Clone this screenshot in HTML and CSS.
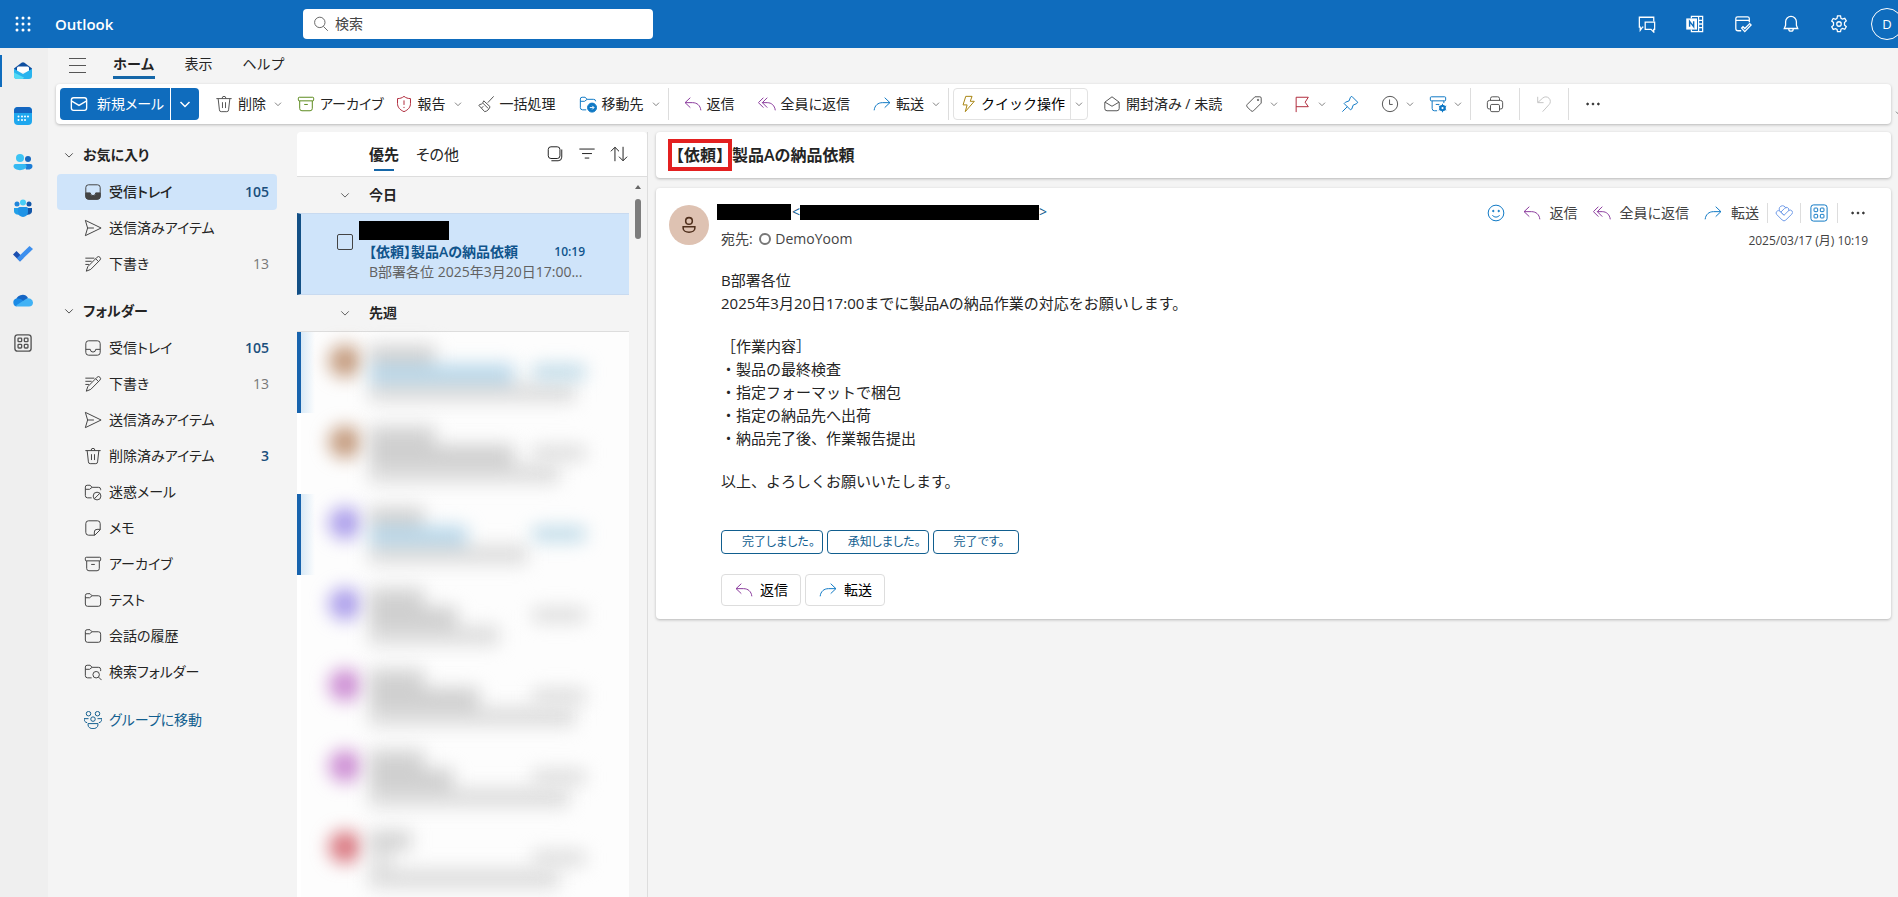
FILE: index.html
```html
<!DOCTYPE html>
<html lang="ja">
<head>
<meta charset="utf-8">
<title>Outlook</title>
<link rel="stylesheet" href="styles.css">
</head>
<body>
<svg class="sprite" aria-hidden="true">
  <symbol id="chev" viewBox="0 0 12 12"><path d="M1.500 4 6 8.500 10.500 4"/></symbol>
  <symbol id="trash" viewBox="0 0 20 20"><path d="M1.500 4h17M8 4v-.5a2 2 0 0 1 4 0V4M3.500 4l1.400 12.500A2 2 0 0 0 6.900 18.500h6.200a2 2 0 0 0 2-2L16.500 4M8.300 8v6.500M11.700 8v6.500"/></symbol>
  <symbol id="archive" viewBox="0 0 20 20"><rect x="1.500" y="2.500" width="17" height="4" rx="1"/><path d="M3 6.500V15a2.500 2.500 0 0 0 2.500 2.500h9A2.500 2.500 0 0 0 17 15V6.500M8 10.500h4"/></symbol>
  <symbol id="shield" viewBox="0 0 20 20"><path d="M10 1.500c2 1.700 4.500 2.500 7.200 2.500v5.500c0 4-2.500 7-7.200 9-4.700-2-7.200-5-7.200-9V4C5.500 4 8 3.200 10 1.500zM10 6v5M10 13.200v1.300"/></symbol>
  <symbol id="broom" viewBox="0 0 20 20"><path d="m18.500 1.500-6.500 7M7.500 6.500l7 6.500c-1 3-3 5-6 5.500L2 11.500c1-1 1.500-1 3-1.500 1.300-.7 2-2 2.500-3.500zM5 14.500l2-2M6.500 9l6 6"/></symbol>
  <symbol id="folder" viewBox="0 0 20 20"><path d="M1.500 5A2 2 0 0 1 3.500 3h3.200l2.300 2.300H16A2.500 2.500 0 0 1 18.500 8v6.500A2.500 2.500 0 0 1 16 17H4a2.500 2.500 0 0 1-2.500-2.500zM1.500 7.500h4.700L9 5.300"/></symbol>
  <symbol id="foldermove" viewBox="0 0 20 20"><path d="M8 16.500H4A2.500 2.500 0 0 1 1.500 14V4.500a2 2 0 0 1 2-2h3.200L9 4.800h7A2.300 2.300 0 0 1 18.500 7M1.500 7h4.700L9 4.800"/><circle cx="14.500" cy="14" r="5" class="fill"/><path class="white" d="M12 14h4.500M14.700 12l2 2-2 2"/></symbol>
  <symbol id="folderblock" viewBox="0 0 20 20"><path d="M8.500 16.500H4A2.500 2.500 0 0 1 1.500 14V4.500a2 2 0 0 1 2-2h3.200L9 4.800h7A2.300 2.300 0 0 1 18.500 7v1M1.500 7h4.700L9 4.800"/><circle cx="14.500" cy="14.500" r="4.300"/><path d="m11.500 17.500 6-6"/></symbol>
  <symbol id="foldersearch" viewBox="0 0 20 20"><path d="M8.500 16.500H4A2.500 2.500 0 0 1 1.500 14V4.500a2 2 0 0 1 2-2h3.200L9 4.800h7A2.300 2.300 0 0 1 18.500 7v2M1.500 7h4.700L9 4.800"/><circle cx="13.500" cy="13" r="3.600"/><path d="m16.200 15.700 3.300 3.300"/></symbol>
  <symbol id="reply" viewBox="0 0 20 20"><path d="M7 3 1.200 8.500 7 14M1.200 8.500h8.300c5 0 8.700 3.200 9.200 8.500"/></symbol>
  <symbol id="replyall" viewBox="0 0 20 20"><path d="M6 3 .5 8.500 6 14M10.300 3 4.800 8.500l5.500 5.500M4.800 8.500h5.500c4.700 0 8.200 3.200 8.900 8.500"/></symbol>
  <symbol id="forward" viewBox="0 0 20 20"><path d="m13 3 5.800 5.500L13 14M18.800 8.500h-8.300c-5 0-8.700 3.200-9.200 8.500"/></symbol>
  <symbol id="bolt" viewBox="0 0 20 20"><path d="M7.500 1.500h7L12.500 7H17L7 18.500l2-7.500H4.500z"/></symbol>
  <symbol id="mailopen" viewBox="0 0 20 20"><path d="M2 8 10 2l8 6v7a2.500 2.500 0 0 1-2.500 2.500h-11A2.500 2.500 0 0 1 2 15zM2.300 8 10 12.500 17.700 8"/></symbol>
  <symbol id="tag" viewBox="0 0 20 20"><path d="M11 2h5.500A1.500 1.500 0 0 1 18 3.500V9l-8.500 8.500a2 2 0 0 1-2.800 0l-4.200-4.200a2 2 0 0 1 0-2.800z"/><circle cx="14.500" cy="5.500" r=".8"/></symbol>
  <symbol id="flag" viewBox="0 0 20 20"><path d="M3.500 19V2.500h13.500L13.500 8l3.500 5H3.500"/></symbol>
  <symbol id="pin" viewBox="0 0 20 20"><path d="m12 1.500 6.500 6.500-1 1.500-4 1.800-1.500 4.200-1.500 1L3.500 9.500 5 8l4-1.500L10.500 2.500zM7 13l-5.500 5.500"/></symbol>
  <symbol id="clock" viewBox="0 0 20 20"><circle cx="10" cy="10" r="8.500"/><path d="M9.500 5v5.500H13"/></symbol>
  <symbol id="rules" viewBox="0 0 20 20"><rect x="1.500" y="2" width="17" height="4.500" rx="1"/><path d="M3.500 6.500V15A2.500 2.500 0 0 0 6 17.500h3M16.500 6.500V9M7.500 10.500h4"/><circle cx="15" cy="14.500" r="3.200" class="fill"/><path d="M15 9.800v9.400M10.900 12.200l8.200 4.600M10.900 16.800l8.200-4.600"/><circle cx="15" cy="14.500" r="1.200" class="dot"/></symbol>
  <symbol id="printer" viewBox="0 0 20 20"><path d="M5 6V4a2 2 0 0 1 2-2h6a2 2 0 0 1 2 2v2M5 15.500H3.500a2 2 0 0 1-2-2v-5A2.500 2.500 0 0 1 4 6h12a2.500 2.500 0 0 1 2.500 2.500v5a2 2 0 0 1-2 2H15"/><rect x="5" y="10.500" width="10" height="8" rx="1.500"/></symbol>
  <symbol id="undo" viewBox="0 0 20 20"><path d="M3 2v6.500h6.500M3.200 8.300 8.500 3.500a5 5 0 0 1 7 7.300L8.500 18.500"/></symbol>
  <symbol id="dots" viewBox="0 0 20 20"><g class="fill"><circle cx="4" cy="10" r="1"/><circle cx="10" cy="10" r="1"/><circle cx="16" cy="10" r="1"/></g></symbol>
  <symbol id="mail" viewBox="0 0 20 20"><rect x="1.500" y="3" width="17" height="14" rx="2.500"/><path d="m1.500 6.500 8.500 5 8.500-5"/></symbol>
  <symbol id="inbox" viewBox="0 0 20 20"><rect x="2" y="2" width="16" height="16" rx="3"/><path d="M2 11.500h5a3 3 0 0 0 6 0h5"/></symbol>
  <symbol id="inboxfill" viewBox="0 0 20 20"><rect x="2" y="2" width="16" height="16" rx="3"/><path class="fill" d="M2 11h5a3 3 0 0 0 6 0h5v4a3 3 0 0 1-3 3H5a3 3 0 0 1-3-3z"/></symbol>
  <symbol id="send" viewBox="0 0 20 20"><path d="M1.500 1.500 19 10 1.500 18.500 4 10zM4 10h7"/></symbol>
  <symbol id="draft" viewBox="0 0 20 20"><path d="m14.500 2.500a2.200 2.200 0 0 1 3.200 3.200L7.500 16 2.500 18l1.700-5zM13 4.200l3.200 3.200M1.500 3.500h10M1.500 7h7M1.500 10.500h4"/></symbol>
  <symbol id="note" viewBox="0 0 20 20"><path d="M5 2h10a3 3 0 0 1 3 3v7l-6 6H5a3 3 0 0 1-3-3V5a3 3 0 0 1 3-3zM18 11.500h-3.500a3 3 0 0 0-3 3V18"/></symbol>
  <symbol id="groups" viewBox="0 0 20 20"><circle cx="5" cy="3" r="2.500"/><circle cx="15" cy="3" r="2.500"/><circle cx="10" cy="9" r="2.500"/><path d="M4.500 14h11v1.500c0 5.500-11 5.500-11 0zM3.500 13C1.200 12.500 0 11 0 8.500h5M16.500 13c2.300-.5 3.500-2 3.500-4.500h-5"/></symbol>
  <symbol id="search" viewBox="0 0 20 20"><circle cx="8.500" cy="8" r="6.500"/><path d="m13 13 5.500 5.500"/></symbol>
  <symbol id="select" viewBox="0 0 20 20"><rect x="2.500" y="2" width="13" height="13" rx="3"/><path d="M17.500 5v8.500a4 4 0 0 1-4 4H6"/></symbol>
  <symbol id="filter" viewBox="0 0 20 20"><path d="M1.500 4.500h17M4.500 9.500h11M7.500 14.500h5"/></symbol>
  <symbol id="sort" viewBox="0 0 20 20"><path d="M5.500 18V2.500M1 7l4.500-4.500L10 7M14.500 2v15.500M10 13l4.500 4.500L19 13"/></symbol>
  <symbol id="smile" viewBox="0 0 20 20"><circle cx="10" cy="10" r="8.700"/><path d="M6 12.500c2 2.700 6 2.700 8 0"/><g class="fill"><circle cx="7" cy="7.800" r=".8"/><circle cx="13" cy="7.800" r=".8"/></g></symbol>
  <symbol id="loop" viewBox="0 0 20 20"><path d="M6 8.500a3.700 3.700 0 1 1 6-3.500M6 8.500 10 12.500l5-5a2.600 2.600 0 0 1 3.700 3.700l-6.700 6.600a2.800 2.800 0 0 1-4 0l-6-6a2.500 2.500 0 0 1 0-3.600M6 8.500a2.500 2.500 0 0 0-4-.3M10 12.500 6.500 9l4-4a2.500 2.500 0 0 1 4.500 2.500"/></symbol>
  <symbol id="apps" viewBox="0 0 20 20"><rect x="1" y="1" width="18" height="18" rx="3"/><rect x="4.500" y="4.500" width="4" height="4" rx=".8"/><rect x="11.500" y="4.500" width="4" height="4" rx=".8"/><rect x="4.500" y="11.500" width="4" height="4" rx=".8"/><rect x="11.500" y="11.500" width="4" height="4" rx=".8"/></symbol>
  <symbol id="chat" viewBox="0 0 20 20"><path d="M6 13.500H5L2.500 17v-3.500h-1v-11h16V7M8 8h10.500v8h-1v3L14.500 16H8z"/></symbol>
  <symbol id="onenote" viewBox="0 0 20 20"><path d="M6 4V1.500h12.500v17H6V16M14 1.500v17M14 6h4.500M14 10h4.500M14 14h4.500"/><rect x="1" y="4.500" width="10.500" height="11" class="fill"/><path class="ink" d="M4 13V7l4.500 6V7"/></symbol>
  <symbol id="todo" viewBox="0 0 20 20"><path d="M8 17.500H4.500A2.500 2.500 0 0 1 2 15V4a2 2 0 0 1 2-2h11a2 2 0 0 1 2 2v4M2 6h15M8.500 14.500l3.500 4 7-7.500-1.500-1.500-5.500 5.500-2-2z"/></symbol>
  <symbol id="bell" viewBox="0 0 20 20"><path d="M10 1.500a6 6 0 0 0-6 6v4L2.500 15h15L16 11.500v-4a6 6 0 0 0-6-6zM7.500 15.500a2.500 2.500 0 0 0 5 0"/></symbol>
  <symbol id="gear" viewBox="0 0 20 20"><path d="m8.300 1h3.400l.5 2.700 1.600.9 2.600-.9 1.700 2.900-2 1.800v2.800l2 1.800-1.700 2.900-2.600-.9-1.600.9-.5 2.700H8.300L7.800 16l-1.600-.9-2.600.9-1.700-2.900 2-1.800V8.500l-2-1.800 1.700-2.900 2.600.9 1.600-.9z"/><circle cx="10" cy="10" r="2.500"/></symbol>
</svg>

<header class="topbar">
  <button class="waffle" aria-label="アプリ起動ツール"><svg viewBox="0 0 16 16"><g fill="#fff"><circle cx="2" cy="2" r="1.500"/><circle cx="8" cy="2" r="1.500"/><circle cx="14" cy="2" r="1.500"/><circle cx="2" cy="8" r="1.500"/><circle cx="8" cy="8" r="1.500"/><circle cx="14" cy="8" r="1.500"/><circle cx="2" cy="14" r="1.500"/><circle cx="8" cy="14" r="1.500"/><circle cx="14" cy="14" r="1.500"/></g></svg></button>
  <a class="brand" href="#">Outlook</a>
  <label class="search"><svg class="ico"><use href="#search"/></svg><input type="text" placeholder="検索" aria-label="検索"></label>
  <nav class="topicons">
    <button aria-label="チャット"><svg class="ico"><use href="#chat"/></svg></button>
    <button aria-label="OneNote"><svg class="ico"><use href="#onenote"/></svg></button>
    <button aria-label="予定"><svg class="ico"><use href="#todo"/></svg></button>
    <button aria-label="通知"><svg class="ico"><use href="#bell"/></svg></button>
    <button aria-label="設定"><svg class="ico"><use href="#gear"/></svg></button>
    <button class="me">D</button>
  </nav>
</header>

<div class="shell">
  <nav class="rail">
    <a class="current" href="#" aria-label="メール"><svg viewBox="0 0 20 20"><path fill="#0f4fa0" d="M1 8.500 8.500 2.800a2.500 2.500 0 0 1 3 0L19 8.500v3H1z"/><path fill="#fff" d="M4 8a1.500 1.500 0 0 1 1.500-1.500h9A1.500 1.500 0 0 1 16 8v4.500H4z"/><path fill="#29b4ee" d="M1 8.800 10 14l9-5.200V16a3 3 0 0 1-3 3H4a3 3 0 0 1-3-3z"/><path fill="#54daf5" d="M1 12.500V16a3 3 0 0 0 3 3h6l1-1.500z"/></svg></a>
    <a href="#" aria-label="予定表"><svg viewBox="0 0 20 20"><rect x="1" y="1" width="18" height="18" rx="4" fill="#1ea7ee"/><path fill="#1466c0" d="M1 7V5a4 4 0 0 1 4-4h10a4 4 0 0 1 4 4v2z"/><g fill="#fff"><circle cx="9" cy="10.500" r="1"/><circle cx="12" cy="10.500" r="1"/><circle cx="15" cy="10.500" r="1"/><circle cx="5.500" cy="10.500" r="1"/><circle cx="5.500" cy="14" r="1"/><circle cx="9" cy="14" r="1"/><circle cx="12" cy="14" r="1"/></g></svg></a>
    <a href="#" aria-label="連絡先"><svg viewBox="0 0 20 20"><circle cx="7" cy="6" r="4" fill="#3cc4f4"/><circle cx="15" cy="7" r="3" fill="#1669bf"/><path fill="#1c7dd6" d="M11 12h6.500a2 2 0 0 1 2 2c0 3-3 4-6.500 3.500z"/><path fill="#35b9f2" d="M2.500 12h9a2 2 0 0 1 2 2c0 5.500-13 5.500-13 0a2 2 0 0 1 2-2z"/></svg></a>
    <a href="#" aria-label="グループ"><svg viewBox="0 0 20 20"><circle cx="4" cy="6" r="2.500" fill="#1f85da"/><circle cx="16" cy="6" r="2.500" fill="#1256a8"/><circle cx="10" cy="4.500" r="3" fill="#48cdf6"/><path fill="#22a0e8" d="M1 10h7v7c-4 0-7-1-7-4z"/><path fill="#1256a8" d="M19 10h-7v7c4 0 7-1 7-4z"/><path fill="#1f93e6" d="M5 10.500A1.500 1.500 0 0 1 6.500 9h7a1.500 1.500 0 0 1 1.500 1.500V14a5 5 0 0 1-10 0z"/></svg></a>
    <a href="#" aria-label="To Do"><svg viewBox="0 0 20 20"><path fill="#1b4fb0" d="m0 10.500 3.500-3.500 7 7L7 17.500z"/><path fill="#3d8fee" d="M7 17.500 3.800 14.300 16.500 2 20 5z"/></svg></a>
    <a href="#" aria-label="OneDrive"><svg viewBox="0 0 20 20"><path fill="#1565c4" d="M3 12a6.500 6.500 0 0 1 12-4l-4 5z"/><path fill="#1b8be6" d="M4 16.500A4 4 0 0 1 3.500 8.600C7 8 9 10 12 12z"/><path fill="#41b2f5" d="M3 15.500 13 9a4.500 4.500 0 0 1 7 3.500c0 2.500-1.500 4-4 4H5z"/></svg></a>
    <a class="more" href="#" aria-label="その他のアプリ"><svg class="ico"><use href="#apps"/></svg></a>
  </nav>

  <div class="work">
    <div class="tabs">
      <button class="burger" aria-label="メニュー"><span></span><span></span><span></span></button>
      <button class="tab on">ホーム</button>
      <button class="tab">表示</button>
      <button class="tab">ヘルプ</button>
    </div>

    <div class="ribbon">
      <div class="newmail"><button><svg class="ico"><use href="#mail"/></svg>新規メール</button><button class="drop" aria-label="新規作成"><svg class="ico"><use href="#chev"/></svg></button></div>
      <button class="cmd split"><svg class="ico"><use href="#trash"/></svg>削除</button><button class="caret" aria-label="削除メニュー"><svg class="ico"><use href="#chev"/></svg></button>
      <button class="cmd snug"><svg class="ico green"><use href="#archive"/></svg>アーカイブ</button>
      <button class="cmd split"><svg class="ico red"><use href="#shield"/></svg>報告</button><button class="caret" aria-label="報告メニュー"><svg class="ico"><use href="#chev"/></svg></button>
      <button class="cmd"><svg class="ico"><use href="#broom"/></svg>一括処理</button>
      <button class="cmd split"><svg class="ico blue"><use href="#foldermove"/></svg>移動先</button><button class="caret" aria-label="移動メニュー"><svg class="ico"><use href="#chev"/></svg></button>
      <span class="sep"></span>
      <button class="cmd"><svg class="ico purple"><use href="#reply"/></svg>返信</button>
      <button class="cmd"><svg class="ico purple"><use href="#replyall"/></svg>全員に返信</button>
      <button class="cmd split"><svg class="ico blue"><use href="#forward"/></svg>転送</button><button class="caret" aria-label="転送メニュー"><svg class="ico"><use href="#chev"/></svg></button>
      <span class="sep"></span>
      <div class="quick"><button><svg class="ico gold"><use href="#bolt"/></svg>クイック操作</button><button class="drop" aria-label="クイック操作メニュー"><svg class="ico"><use href="#chev"/></svg></button></div>
      <button class="cmd"><svg class="ico"><use href="#mailopen"/></svg>開封済み / 未読</button>
      <button class="cmd split" aria-label="分類"><svg class="ico"><use href="#tag"/></svg></button><button class="caret" aria-label="分類メニュー"><svg class="ico"><use href="#chev"/></svg></button>
      <button class="cmd split" aria-label="フラグ"><svg class="ico red"><use href="#flag"/></svg></button><button class="caret" aria-label="フラグメニュー"><svg class="ico"><use href="#chev"/></svg></button>
      <button class="cmd" aria-label="ピン留め"><svg class="ico blue"><use href="#pin"/></svg></button>
      <button class="cmd split" aria-label="再通知"><svg class="ico"><use href="#clock"/></svg></button><button class="caret" aria-label="再通知メニュー"><svg class="ico"><use href="#chev"/></svg></button>
      <button class="cmd split" aria-label="ルール"><svg class="ico blue"><use href="#rules"/></svg></button><button class="caret" aria-label="ルールメニュー"><svg class="ico"><use href="#chev"/></svg></button>
      <span class="sep"></span>
      <button class="cmd" aria-label="印刷"><svg class="ico"><use href="#printer"/></svg></button>
      <span class="sep"></span>
      <button class="cmd" aria-label="元に戻す" disabled><svg class="ico faint"><use href="#undo"/></svg></button>
      <span class="sep"></span>
      <button class="cmd" aria-label="その他"><svg class="ico dark"><use href="#dots"/></svg></button>
      <button class="expand" aria-label="リボンの表示"><svg class="ico"><use href="#chev"/></svg></button>
    </div>

    <div class="panes">
      <nav class="folders">
        <h2><svg class="ico"><use href="#chev"/></svg>お気に入り</h2>
        <a class="on" href="#"><svg class="ico"><use href="#inboxfill"/></svg>受信トレイ<b>105</b></a>
        <a href="#"><svg class="ico"><use href="#send"/></svg>送信済みアイテム</a>
        <a href="#"><svg class="ico"><use href="#draft"/></svg>下書き<i>13</i></a>
        <h2><svg class="ico"><use href="#chev"/></svg>フォルダー</h2>
        <a href="#"><svg class="ico"><use href="#inbox"/></svg>受信トレイ<b>105</b></a>
        <a href="#"><svg class="ico"><use href="#draft"/></svg>下書き<i>13</i></a>
        <a href="#"><svg class="ico"><use href="#send"/></svg>送信済みアイテム</a>
        <a href="#"><svg class="ico"><use href="#trash"/></svg>削除済みアイテム<b>3</b></a>
        <a href="#"><svg class="ico"><use href="#folderblock"/></svg>迷惑メール</a>
        <a href="#"><svg class="ico"><use href="#note"/></svg>メモ</a>
        <a href="#"><svg class="ico"><use href="#archive"/></svg>アーカイブ</a>
        <a href="#"><svg class="ico"><use href="#folder"/></svg>テスト</a>
        <a href="#"><svg class="ico"><use href="#folder"/></svg>会話の履歴</a>
        <a href="#"><svg class="ico"><use href="#foldersearch"/></svg>検索フォルダー</a>
        <a class="togroup" href="#"><svg class="ico"><use href="#groups"/></svg>グループに移動</a>
      </nav>

      <section class="list">
        <header>
          <button class="pivot on">優先</button>
          <button class="pivot">その他</button>
          <div class="tools">
            <button aria-label="選択"><svg class="ico"><use href="#select"/></svg></button>
            <button aria-label="フィルター"><svg class="ico"><use href="#filter"/></svg></button>
            <button aria-label="並べ替え"><svg class="ico"><use href="#sort"/></svg></button>
          </div>
        </header>
        <div class="scroller">
          <div class="rows">
            <h3><svg class="ico"><use href="#chev"/></svg>今日</h3>
            <article class="mail">
              <input type="checkbox" aria-label="メッセージを選択">
              <div class="lines">
                <span class="mask sender"></span>
                <div class="subject"><strong>【依頼】製品Aの納品依頼</strong><time>10:19</time></div>
                <p>B部署各位 2025年3月20日17:00...</p>
              </div>
            </article>
            <h3 class="ruled"><svg class="ico"><use href="#chev"/></svg>先週</h3>
            <div class="veiled unread" aria-hidden="true"><span class="face tan"></span><div class="bars"><i style="width:66px"></i><i class="hot" style="width:145px"></i><i style="width:206px"></i></div><em></em></div>
            <div class="veiled" aria-hidden="true"><span class="face tan"></span><div class="bars"><i style="width:66px"></i><i class="mid" style="width:145px"></i><i style="width:190px"></i></div><em></em></div>
            <div class="veiled unread" aria-hidden="true"><span class="face violet"></span><div class="bars"><i style="width:55px"></i><i class="hot" style="width:98px"></i><i style="width:158px"></i></div><em></em></div>
            <div class="veiled" aria-hidden="true"><span class="face violet"></span><div class="bars"><i style="width:55px"></i><i class="mid" style="width:88px"></i><i style="width:130px"></i></div><em></em></div>
            <div class="veiled" aria-hidden="true"><span class="face pink"></span><div class="bars"><i style="width:55px"></i><i class="mid" style="width:110px"></i><i style="width:206px"></i></div><em></em></div>
            <div class="veiled" aria-hidden="true"><span class="face pink"></span><div class="bars"><i style="width:55px"></i><i class="mid" style="width:84px"></i><i style="width:200px"></i></div><em></em></div>
            <div class="veiled" aria-hidden="true"><span class="face rose"></span><div class="bars"><i style="width:42px"></i><i class="pale" style="width:24px"></i><i style="width:190px"></i></div><em></em></div>
          </div>
          <div class="track"><span class="up"></span><span class="thumb"></span></div>
        </div>
      </section>

      <main class="reader">
        <h1 class="card"><mark>【依頼】</mark>製品Aの納品依頼</h1>
        <article class="card message">
          <div class="head">
            <span class="avatar"><svg viewBox="0 0 20 20"><circle cx="10" cy="5.500" r="3.700"/><path d="M3.500 12h13v1.500c0 6-13 6-13 0z"/></svg></span>
            <div class="who">
              <div class="from"><span class="mask name"></span>&lt;<span class="mask addr"></span>&gt;</div>
              <div class="to">宛先: <span class="ring"></span>DemoYoom</div>
            </div>
            <div class="side">
              <div class="acts">
                <button aria-label="リアクション"><svg class="ico blue"><use href="#smile"/></svg></button>
                <button><svg class="ico purple"><use href="#reply"/></svg>返信</button>
                <button><svg class="ico purple"><use href="#replyall"/></svg>全員に返信</button>
                <button><svg class="ico blue"><use href="#forward"/></svg>転送</button>
                <span class="sep"></span>
                <button aria-label="Loop"><svg class="ico sky"><use href="#loop"/></svg></button>
                <span class="sep"></span>
                <button class="addin" aria-label="アプリ"><svg class="ico blue"><use href="#apps"/></svg></button>
                <span class="sep"></span>
                <button aria-label="その他の操作"><svg class="ico dark"><use href="#dots"/></svg></button>
              </div>
              <time>2025/03/17 (月) 10:19</time>
            </div>
          </div>
          <div class="body">
            <p>B部署各位<br>2025年3月20日17:00までに製品Aの納品作業の対応をお願いします。</p>
            <p>［作業内容］<br>・製品の最終検査<br>・指定フォーマットで梱包<br>・指定の納品先へ出荷<br>・納品完了後、作業報告提出</p>
            <p>以上、よろしくお願いいたします。</p>
          </div>
          <div class="suggest"><button>完了しました。</button><button>承知しました。</button><button>完了です。</button></div>
          <div class="answer"><button><svg class="ico purple"><use href="#reply"/></svg>返信</button><button><svg class="ico blue"><use href="#forward"/></svg>転送</button></div>
        </article>
      </main>
    </div>
  </div>
</div>
</body>
</html>
```
FILE: styles.css
```css
* { box-sizing: border-box; }
body {
  margin: 0;
  height: 100vh;
  display: flex;
  flex-direction: column;
  overflow: hidden;
  background: #f4f4f4;
  color: #242424;
  font: 14px/20px "Open Sans", "Noto Sans CJK JP", sans-serif;
  font-feature-settings: "palt";
}
button, input { font: inherit; font-feature-settings: inherit; color: inherit; }
button { border: 0; padding: 0; background: none; display: flex; align-items: center; white-space: nowrap; }
a { color: inherit; text-decoration: none; }
h1, h2, h3, p { margin: 0; }
.sprite { position: absolute; width: 0; height: 0; }
.ico { width: 18px; height: 18px; margin: 0 -1px; flex: none; fill: none; stroke: currentColor; stroke-width: 1.1; color: #555; overflow: visible; }
.fill { fill: currentColor; }
.white { stroke: #fff; }
.ink { stroke: #0f6cbd; stroke-width: 1.600; }
.dot { fill: #fff; stroke: none; }
.green { color: #5b8a1c; }
.red { color: #b02a3c; }
.blue { color: #0f78c4; }
.purple { color: #8a3a9c; }
.gold { color: #a88410; }
.sky { color: #6f9be8; }
.faint { color: #c4c4c4; }
.dark { color: #333; }
.mask { display: block; background: #000; }

/* Top bar */
.topbar { flex: none; display: flex; align-items: center; height: 48px; background: #0f6cbd; color: #fff; }
.waffle { width: 46px; height: 48px; justify-content: center; }
.waffle svg { width: 16px; height: 16px; }
.brand { width: 257px; padding-left: 9px; font-size: 15px; font-weight: 600; }
.search { display: flex; align-items: center; gap: 6px; width: 350px; height: 30px; padding: 0 10px; background: #fff; border-radius: 4px; }
.search .ico { width: 16px; height: 16px; margin: 0; }
.search input { flex: 1; min-width: 0; border: 0; padding: 0; outline: 0; background: none; color: #242424; }
.search input::placeholder { color: #444; opacity: 1; }
.topicons { display: flex; margin-left: auto; margin-right: -13px; }
.topicons button { width: 48px; height: 48px; justify-content: center; }
.topicons .ico { color: #fff; stroke-width: 1.400; }
.topicons .me { width: 32px; height: 32px; margin: 8px; border: 1px solid #fff; border-radius: 50%; font-size: 13px; }

.shell { flex: 1; min-height: 0; display: flex; }

/* App rail */
.rail { flex: none; width: 48px; padding: 1px 2px 0 0; background: #efefef; }
.rail a { display: flex; align-items: center; justify-content: center; height: 46px; padding: 0 2px 4px 0; border-left: 2px solid transparent; }
.rail svg { width: 20px; height: 20px; }
.rail .current { background: linear-gradient(#0f6cbd, #0f6cbd) 0 6px / 2px 32px no-repeat; background-origin: border-box; }
.rail .more { height: 40px; }
.rail .more .ico { width: 18px; height: 18px; stroke-width: 1.500; }

.work { flex: 1; min-width: 0; display: flex; flex-direction: column; }

/* Tabs */
.tabs { flex: none; display: flex; height: 36px; padding-left: 21px; gap: 30px; font-feature-settings: normal; }
.burger { flex-direction: column; justify-content: center; gap: 6px; width: 17px; margin-right: -3px; padding-bottom: 2px; }
.burger span { width: 17px; height: 1px; background: #555; }
.tab { padding-bottom: 4px; }
.tab.on { font-weight: 700; background: linear-gradient(#1567a8, #1567a8) 0 28px / 100% 3px no-repeat; }

/* Ribbon */
.ribbon { position: relative; flex: none; display: flex; align-items: center; height: 40px; margin: 0 7px 8px 8px; padding: 0 4px; background: #fff; border-radius: 4px; box-shadow: 0 1px 3px rgba(0, 0, 0, .25); }
.newmail { display: flex; height: 32px; margin-right: 5px; background: #0f6cbd; color: #fff; border-radius: 4px; }
.newmail .ico { color: #fff; stroke-width: 1.500; }
.newmail button { width: 110px; padding-left: 11px; gap: 10px; }
.newmail .drop { width: 29px; padding: 0; justify-content: center; border-left: 1px solid #fff; }
.drop .ico { width: 12px; height: 12px; margin: 0; }
.cmd { height: 32px; padding: 0 12px; gap: 6px; }
.cmd.split { padding-right: 4px; }
.cmd.snug { padding-right: 0; }
.caret { height: 32px; padding: 0 4px; }
.caret .ico { width: 8px; height: 8px; margin: 0; }
.sep { width: 1px; height: 32px; margin: 0 4px; background: #ddd; }
.quick { display: flex; height: 32px; border: 1px solid #e2e2e2; border-radius: 4px; margin-right: 4px; font-feature-settings: normal; }
.quick button { padding: 0 5px 0 6px; gap: 5px; color: #000; }
.quick .drop { padding: 0 4px; border-left: 1px solid #e2e2e2; }
.quick .drop .ico { width: 8px; height: 8px; }
.expand { position: absolute; right: -12px; bottom: 7px; }
.expand .ico { width: 8px; height: 8px; margin: 0; }

.panes { flex: 1; min-height: 0; display: flex; }

/* Folder tree */
.folders { flex: none; width: 249px; padding: 4px 20px 0 9px; }
.folders h2 { display: flex; align-items: center; gap: 9px; height: 38px; padding-left: 7px; font-size: 14px; font-weight: 600; }
.folders h2 .ico, .rows h3 .ico { width: 10px; height: 10px; margin: 0; }
.folders h2:not(:first-child) { margin-top: 10px; }
.folders a { display: flex; align-items: center; gap: 8px; height: 36px; padding: 0 8px 0 28px; border-radius: 4px; }
.folders .on { background: #cfe4fa; font-weight: 500; }
.folders .ico { color: #444; }
.folders b, .folders i { margin-left: auto; font-style: normal; }
.folders b { color: #1a4f7c; font-weight: 600; }
.folders i { color: #777; }
.folders .togroup { margin-top: 12px; color: #115e8f; }
.folders .togroup .ico { color: #115e8f; }

/* Message list */
.list { flex: none; width: 351px; display: flex; flex-direction: column; border-right: 1px solid #ddd; }
.list > header { flex: none; display: flex; align-items: center; height: 45px; padding: 0 20px 0 72px; gap: 17px; background: #fff; border-bottom: 1px solid #ddd; border-radius: 4px 4px 0 0; }
.pivot { height: 44px; font-size: 15px; }
.pivot.on { font-weight: 600; background: linear-gradient(#1567a8, #1567a8) 50% 37px / 20px 2px no-repeat; }
.tools { display: flex; gap: 16px; margin-left: auto; }
.tools .ico { color: #222; }
.scroller { flex: 1; min-height: 0; display: flex; }
.rows { flex: 1; min-width: 0; overflow: hidden; background: #fdfdfd; }
.rows h3 { display: flex; align-items: center; gap: 19px; height: 36px; padding-left: 43px; background: #f4f4f4; font-size: 14px; font-weight: 600; }
.rows .ruled { height: 37px; border-bottom: 1px solid #ddd; }
.mail { display: flex; height: 82px; border: 1px solid #c8daf0; border-width: 1px 0; border-left: 4px solid #124f85; background: #cfe4fa; }
.mail input { appearance: none; flex: none; width: 16px; height: 16px; margin: 20px 6px 0 36px; border: 1px solid #444; border-radius: 2px; }
.lines { flex: 1; padding-top: 7px; }
.sender { width: 90px; height: 19px; }
.subject { display: flex; justify-content: space-between; align-items: center; padding: 2px 44px 0 10px; color: #10548c; }
.subject strong { font-weight: 600; }
.subject time { font-size: 12px; font-weight: 600; }
.lines p { padding-left: 10px; color: #616161; white-space: nowrap; }

.veiled { display: flex; height: 81px; padding: 13px 44px 0 28px; border-left: 4px solid #fff; }
.veiled.unread { border-left-color: #1763ad; background: linear-gradient(90deg, #d8e9f6, rgba(216, 233, 246, 0) 14px); }
.veiled > * { filter: blur(9px); }
.face { width: 32px; height: 32px; border-radius: 50%; }
.tan { background: #c2987a; }
.violet { background: #a99bea; }
.pink { background: #cb8ad2; }
.rose { background: #d8747d; }
.bars { flex: 1; min-width: 0; margin-left: 8px; }
.bars i { display: block; height: 19px; background: #d2d2d2; }
.bars i + i + i { background: #dcdcdc; }
.bars .hot { background: #b7d7ea; }
.bars .mid { background: #cecece; }
.bars .pale { background: #e4e4e4; }
.veiled em { width: 52px; height: 14px; margin-top: 20px; margin-left: -52px; background: #dadada; }
.unread em { background: #b8d7e6; }

.track { width: 18px; display: flex; flex-direction: column; align-items: center; padding-top: 8px; }
.up { border: 3px solid transparent; border-top: 0; border-bottom: 4px solid #666; }
.thumb { width: 6px; height: 40px; margin-top: 10px; border-radius: 3px; background: #7d7d7d; }

/* Reading pane */
.reader { flex: 1; min-width: 0; padding: 0 7px 0 8px; }
.card { background: #fff; border-radius: 4px; box-shadow: 0 1px 3px rgba(0, 0, 0, .25); }
h1.card { display: flex; align-items: center; height: 46px; margin-bottom: 10px; padding-left: 12px; font-size: 16px; font-weight: 600; font-feature-settings: normal; }
h1 mark { padding: 4px 0; background: none; color: inherit; outline: 4px solid #e32020; outline-offset: -4px; line-height: 24px; }
.message { padding: 15px 23px 13px 65px; }
.head { display: flex; }
.avatar { flex: none; display: flex; align-items: center; justify-content: center; width: 40px; height: 40px; margin: 2px 8px 0 -52px; border-radius: 50%; background: #dec2b2; }
.avatar svg { width: 18px; height: 18px; fill: none; stroke: #4f2f1c; stroke-width: 1.700; }
.who { flex: 1; }
.from { display: flex; align-items: center; height: 18px; color: #115e8f; }
.name { width: 74px; height: 16px; margin-right: 1px; }
.addr { width: 239px; height: 15px; }
.to { display: flex; align-items: center; height: 20px; margin-top: 8px; padding-left: 4px; color: #444; white-space: pre; }
.ring { width: 12px; height: 12px; margin: 0 4px 0 3px; border: 2px solid #777; border-radius: 50%; }
.side { display: flex; flex-direction: column; align-items: flex-end; }
.acts { display: flex; align-items: center; height: 20px; color: #424242; }
.acts button { padding: 0 8px; gap: 10px; }
.acts button:first-child { padding-right: 12px; }
.acts .addin { padding: 0 10px; }
.acts .sep { height: 20px; margin: 0; }
.acts button:last-child { padding-right: 2px; padding-left: 12px; }
.side time { margin-top: 8px; font-size: 12px; color: #424242; }
.body { padding-top: 18px; font-size: 15px; line-height: 23px; font-feature-settings: normal; }
.body p { margin-bottom: 20px; }
.suggest, .answer { display: flex; gap: 4px; }
.suggest { margin-top: 37px; }
.suggest button { height: 24px; min-width: 86px; padding: 0 7px 0 20px; border: 1px solid #115e8f; border-radius: 4px; color: #115e8f; font-size: 12px; }
.answer { margin-top: 20px; }
.answer button { height: 32px; width: 80px; gap: 8px; padding-left: 14px; border: 1px solid #ddd; border-radius: 4px; color: #000; }
```
